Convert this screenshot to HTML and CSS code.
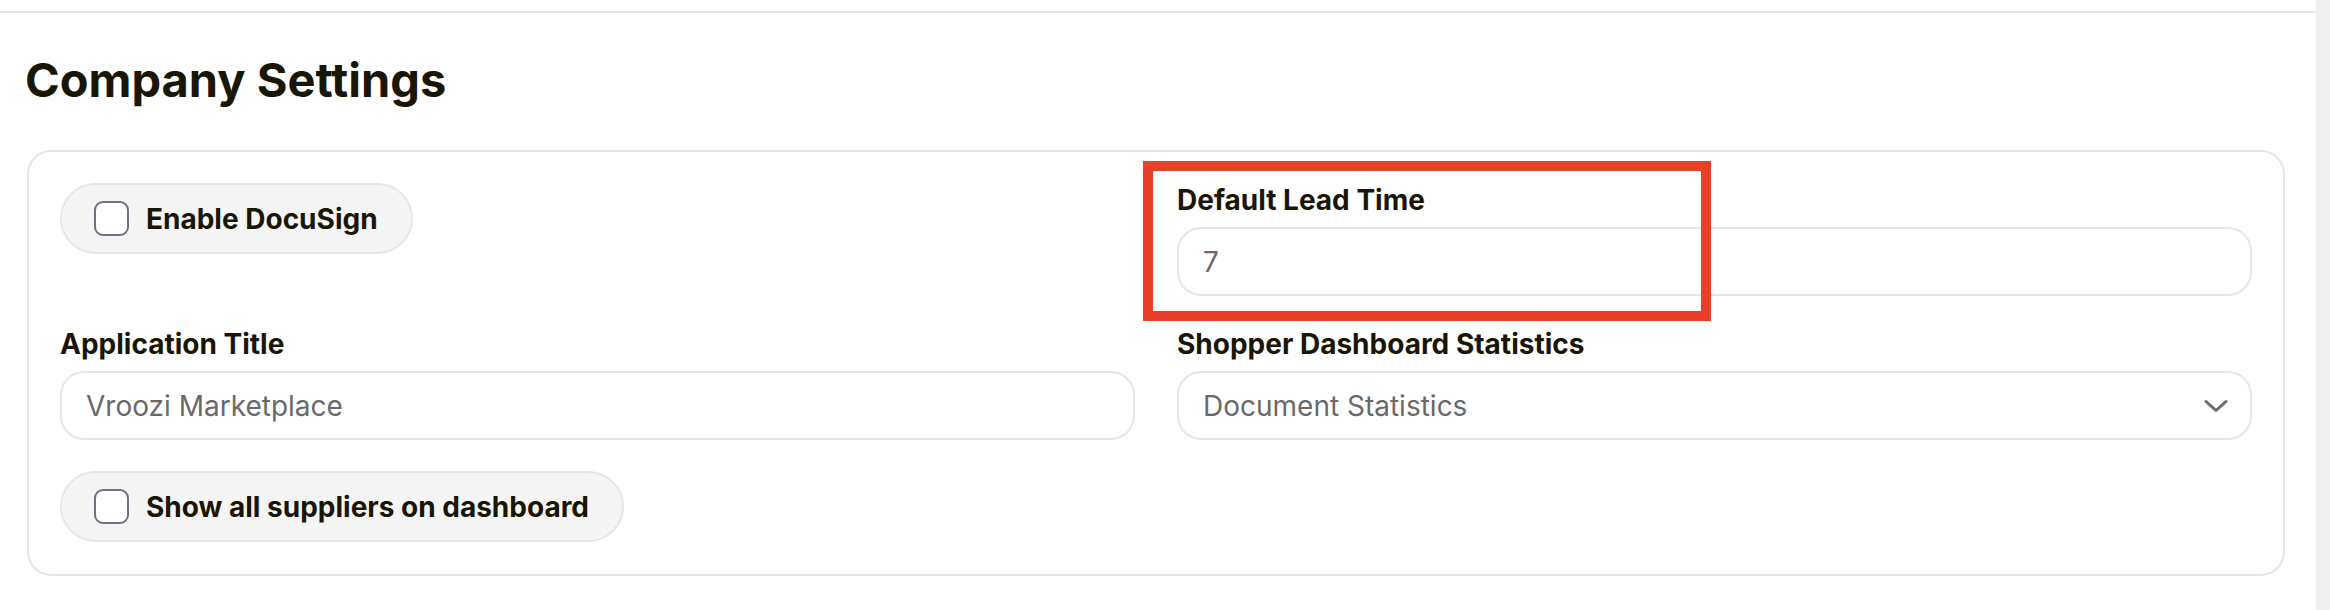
FILE: index.html
```html
<!DOCTYPE html>
<html lang="en">
<head>
<meta charset="utf-8">
<title>Company Settings</title>
<link rel="stylesheet" href="styles.css">
</head>
<body>
<div class="viewport">
  <main class="page">
    <div class="topbar"></div>
    <section class="content">
      <h1 class="page-title">Company Settings</h1>
      <div class="card">
        <div class="settings-grid">
          <label class="check-pill">
            <span class="checkbox"></span>
            <span class="check-label">Enable DocuSign</span>
          </label>

          <div class="field field-marked">
            <div class="field-label">Default Lead Time</div>
            <div class="input"><span class="input-value">7</span></div>
            <div class="marker"></div>
          </div>

          <div class="field">
            <div class="field-label">Application Title</div>
            <div class="input"><span class="input-value">Vroozi Marketplace</span></div>
          </div>

          <div class="field">
            <div class="field-label">Shopper Dashboard Statistics</div>
            <div class="input select">
              <span class="input-value">Document Statistics</span>
              <svg class="chevron" width="24" height="14" viewBox="0 0 24 14" aria-hidden="true">
                <path d="M2 2.5 L12 11.5 L22 2.5" fill="none" stroke="#6a6a6a" stroke-width="3" stroke-linecap="round" stroke-linejoin="round"/>
              </svg>
            </div>
          </div>

          <label class="check-pill">
            <span class="checkbox"></span>
            <span class="check-label">Show all suppliers on dashboard</span>
          </label>
        </div>
      </div>
    </section>
  </main>
  <div class="scroll-track"></div>
</div>
</body>
</html>
```

FILE: styles.css
```css
* {
  box-sizing: border-box;
}

html, body {
  margin: 0;
  padding: 0;
  background: #ffffff;
}

body {
  font-family: Inter, "Noto Sans", "Liberation Sans", sans-serif;
  color: #1a1606;
}

.viewport {
  display: flex;
  width: 2330px;
  height: 610px;
  overflow: hidden;
}

.page {
  flex: 1;
  min-width: 0;
}

.scroll-track {
  width: 14px;
  background: #eeeeee;
}

.topbar {
  height: 13px;
  border-bottom: 2px solid #e8e8e8;
}

.content {
  padding: 0 31px 0 27px;
}

.page-title {
  margin: 39px 0 0 -2px;
  font-size: 47px;
  line-height: 55px;
  font-weight: 700;
}

.card {
  margin-top: 43px;
  border: 2px solid #e6e6e6;
  border-radius: 24px;
  padding: 31px 31px 32px;
}

.settings-grid {
  display: grid;
  grid-template-columns: 1fr 1fr;
  column-gap: 42px;
  row-gap: 31px;
  align-items: start;
}

.check-pill {
  justify-self: start;
  display: inline-flex;
  align-items: center;
  gap: 17px;
  height: 71px;
  padding: 0 33px 0 32px;
  background: #f5f5f5;
  border: 2px solid #e6e6e6;
  border-radius: 999px;
}

.checkbox {
  width: 35px;
  height: 35px;
  border: 2px solid #6b7280;
  border-radius: 9px;
  background: #ffffff;
}

.check-label {
  font-size: 28px;
  font-weight: 700;
  line-height: 34px;
}

.field {
  position: relative;
}

.field-label {
  font-size: 28px;
  font-weight: 700;
  line-height: 34px;
  margin-bottom: 10px;
}

.input {
  display: flex;
  align-items: center;
  height: 69px;
  padding: 0 22px 0 24px;
  border: 2px solid #e6e6e6;
  border-radius: 24px;
  background: #ffffff;
}

.input-value {
  font-size: 28px;
  line-height: 34px;
  color: #696969;
}

.select {
  justify-content: space-between;
}

.chevron {
  display: block;
}

/* annotation frame drawn over the lead-time field */
.marker {
  position: absolute;
  left: -34px;
  top: -22px;
  width: 568px;
  height: 160px;
  border: 10px solid #e9402a;
  pointer-events: none;
}
```
